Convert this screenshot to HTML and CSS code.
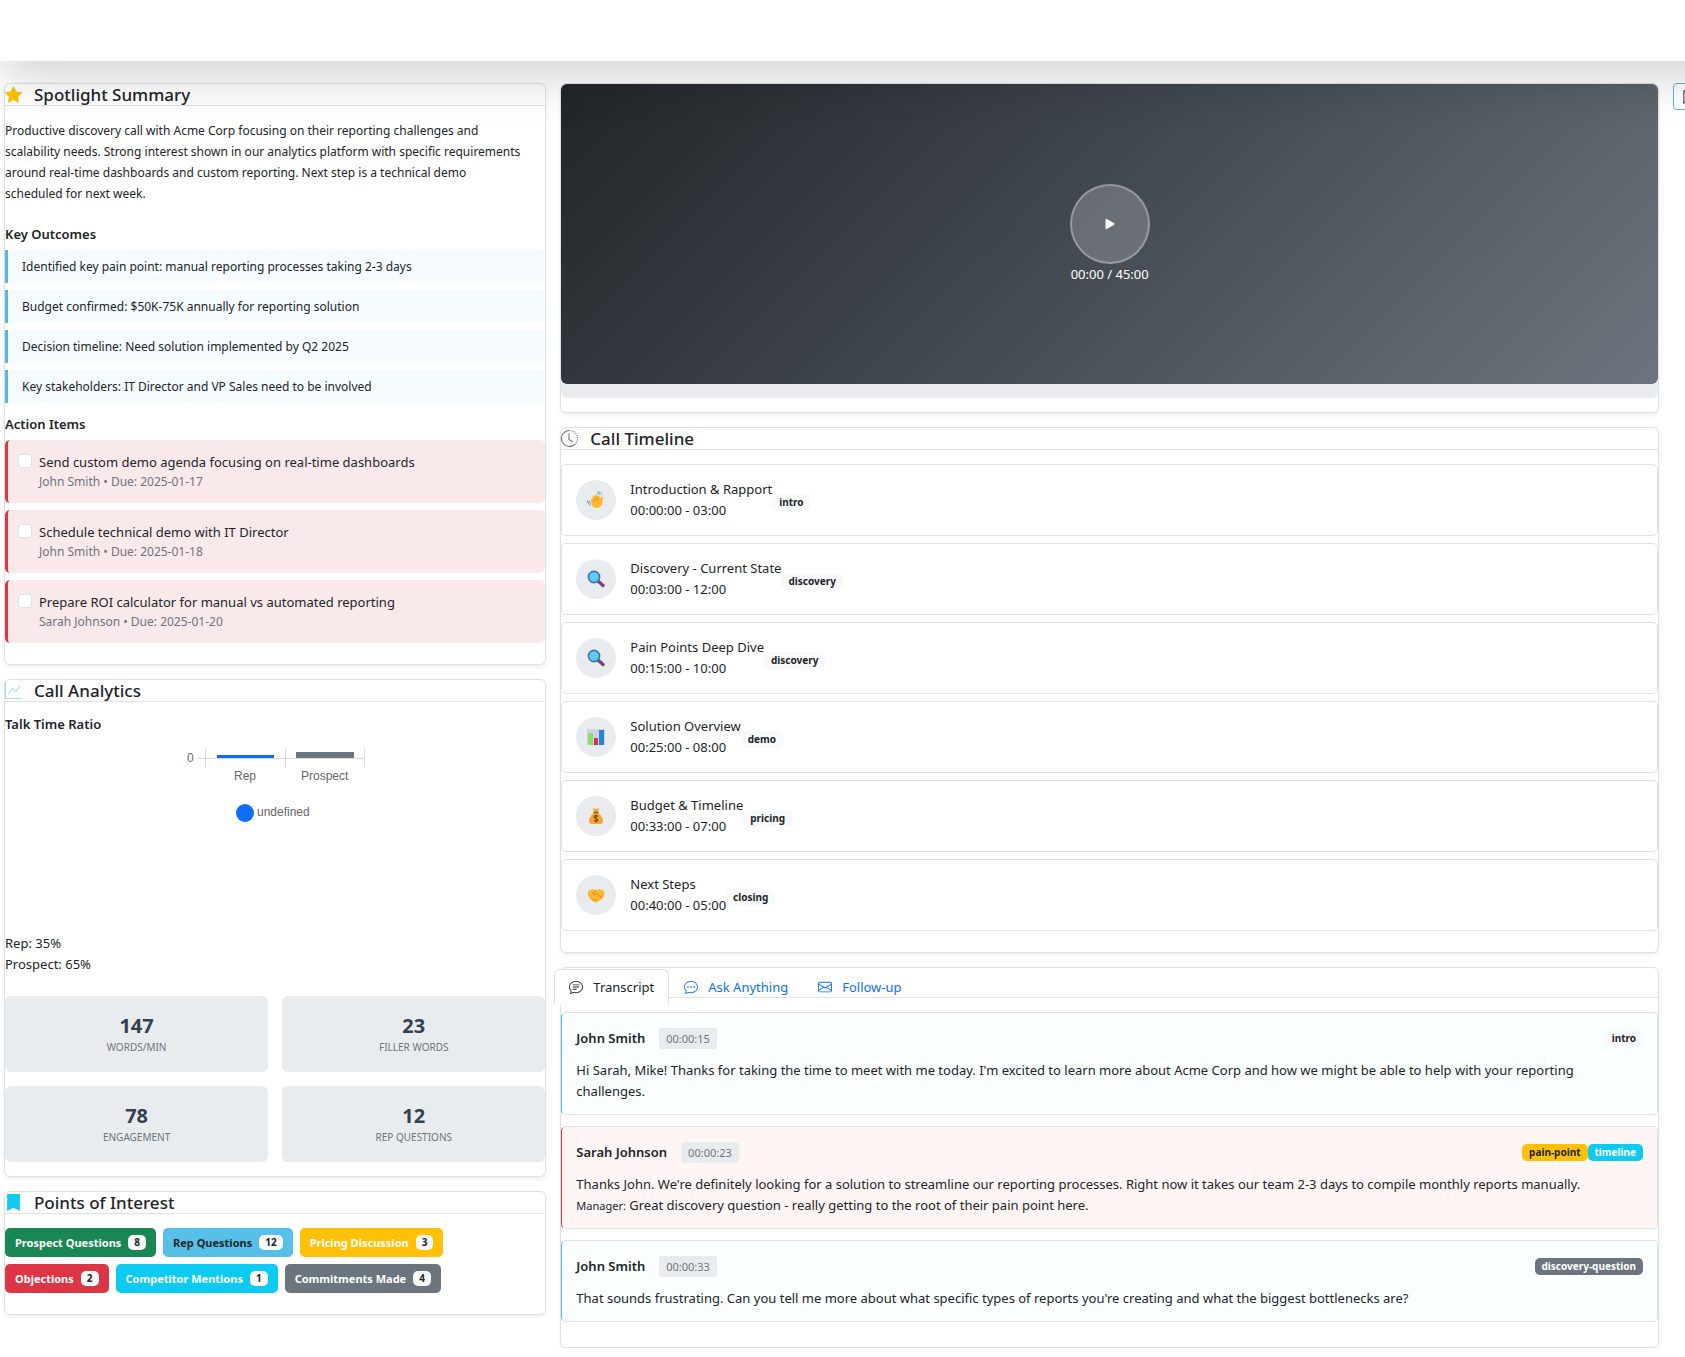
FILE: index.html
```html
<!DOCTYPE html>
<html lang="en">
<head>
    <meta charset="UTF-8">
    <meta name="viewport" content="width=device-width, initial-scale=1.0">
    <title>Call Review</title>
    <link rel="stylesheet" href="styles.css">
</head>
<body>
    <!-- Shared icons -->
    <svg class="sprite" aria-hidden="true">
        <symbol id="search" viewBox="0 0 18 18">
            <path d="M11 11l5 4.500" stroke="#7d3f86" stroke-width="3.400" stroke-linecap="round"/>
            <circle cx="7" cy="7" r="5.600" fill="#5ccdf5" stroke="#4371a8" stroke-width="1.600"/>
        </symbol>
        <symbol id="chat" viewBox="0 0 16 16">
            <path d="M2.678 11.894a1 1 0 0 1 .287.801 11 11 0 0 1-.398 2c1.395-.323 2.247-.697 2.634-.893a1 1 0 0 1 .71-.074A8 8 0 0 0 8 14c3.996 0 7-2.807 7-6s-3.004-6-7-6-7 2.808-7 6c0 1.468.617 2.830 1.678 3.894m-.493 3.905a22 22 0 0 1-.713.129c-.2.032-.352-.176-.273-.362a10 10 0 0 0 .244-.637l.003-.01c.248-.72.45-1.548.524-2.319C.743 11.370 0 9.760 0 8c0-3.866 3.582-7 8-7s8 3.134 8 7-3.582 7-8 7a9 9 0 0 1-2.347-.306c-.52.263-1.639.742-3.468 1.105"/>
        </symbol>
    </svg>

    <nav class="navbar"></nav>

    <main class="layout">
        <div class="column">
            <section class="card summary">
                <h5 class="card-header">
                    <svg class="icon star" viewBox="0 0 16 16"><path d="M3.612 15.443c-.386.198-.824-.149-.746-.592l.83-4.730L.173 6.765c-.329-.314-.158-.888.283-.95l4.898-.696L7.538.792c.197-.39.73-.39.927 0l2.184 4.327 4.898.696c.441.062.612.636.282.95l-3.522 3.356.83 4.730c.078.443-.36.79-.746.592L8 13.187l-4.389 2.256z"/></svg>
                    Spotlight Summary
                </h5>
                <p class="summary-text">Productive discovery call with Acme Corp focusing on their reporting challenges and scalability needs. Strong interest shown in our analytics platform with specific requirements around real-time dashboards and custom reporting. Next step is a technical demo scheduled for next week.</p>
                <h6>Key Outcomes</h6>
                <ul class="outcomes">
                    <li>Identified key pain point: manual reporting processes taking 2-3 days</li>
                    <li>Budget confirmed: $50K-75K annually for reporting solution</li>
                    <li>Decision timeline: Need solution implemented by Q2 2025</li>
                    <li>Key stakeholders: IT Director and VP Sales need to be involved</li>
                </ul>
                <h6>Action Items</h6>
                <div class="action-item">
                    <input type="checkbox" id="action1">
                    <label for="action1">Send custom demo agenda focusing on real-time dashboards
                        <small>John Smith • Due: 2025-01-17</small></label>
                </div>
                <div class="action-item">
                    <input type="checkbox" id="action2">
                    <label for="action2">Schedule technical demo with IT Director
                        <small>John Smith • Due: 2025-01-18</small></label>
                </div>
                <div class="action-item">
                    <input type="checkbox" id="action3">
                    <label for="action3">Prepare ROI calculator for manual vs automated reporting
                        <small>Sarah Johnson • Due: 2025-01-20</small></label>
                </div>
            </section>

            <section class="card analytics">
                <h5 class="card-header">
                    <svg class="icon graph" viewBox="0 0 16 16"><path d="M0 0h1v15h15v1H0zm14.817 3.113a.5.5 0 0 1 .07.704l-4.500 5.500a.5.5 0 0 1-.74.037L7.060 6.767l-3.656 5.027a.5.5 0 0 1-.808-.588l4-5.500a.5.5 0 0 1 .758-.06l2.609 2.610 4.150-5.073a.5.5 0 0 1 .704-.07"/></svg>
                    Call Analytics
                </h5>
                <h6>Talk Time Ratio</h6>
                <svg class="chart" width="208" height="193" viewBox="0 0 208 193" role="img" aria-label="Talk time ratio chart">
                    <path d="M27 18.500h159M34.500 9v18M114.500 9v18M193.500 9v18M186 18.500h8" stroke="#d8d8d8" fill="none"/>
                    <rect x="46" y="15" width="57" height="3" fill="#0d6efd"/>
                    <rect x="125" y="12" width="58" height="6" fill="#6c757d"/>
                    <circle cx="74" cy="73" r="9" fill="#0d6efd"/>
                    <text x="16" y="22">0</text>
                    <text x="63" y="40">Rep</text>
                    <text x="130" y="40">Prospect</text>
                    <text x="86" y="76">undefined</text>
                </svg>
                <div class="ratio">
                    <div>Rep: 35%</div>
                    <div>Prospect: 65%</div>
                </div>
                <div class="stats">
                    <div class="stat"><strong>147</strong><span>WORDS/MIN</span></div>
                    <div class="stat"><strong>23</strong><span>FILLER WORDS</span></div>
                    <div class="stat"><strong>78</strong><span>ENGAGEMENT</span></div>
                    <div class="stat"><strong>12</strong><span>REP QUESTIONS</span></div>
                </div>
            </section>

            <section class="card points">
                <h5 class="card-header">
                    <svg class="icon bookmark" viewBox="0 0 16 16"><path d="M2 0h12v16L8 13l-6 3z"/></svg>
                    Points of Interest
                </h5>
                <div class="point-list">
                    <button type="button" class="point green">Prospect Questions <span>8</span></button>
                    <button type="button" class="point blue">Rep Questions <span>12</span></button>
                    <button type="button" class="point yellow">Pricing Discussion <span>3</span></button>
                    <button type="button" class="point red">Objections <span>2</span></button>
                    <button type="button" class="point cyan">Competitor Mentions <span>1</span></button>
                    <button type="button" class="point gray">Commitments Made <span>4</span></button>
                </div>
            </section>
        </div>

        <div class="column">
            <section class="card player">
                <div class="video">
                    <button type="button" class="play" aria-label="Play">
                        <svg width="18" height="18" viewBox="0 0 16 16"><path d="m11.596 8.697-6.363 3.692c-.54.313-1.233-.066-1.233-.697V4.308c0-.63.692-1.010 1.233-.696l6.363 3.692a.802.802 0 0 1 0 1.393"/></svg>
                    </button>
                    <span>00:00 / 45:00</span>
                </div>
                <div class="progress"></div>
            </section>

            <section class="card timeline">
                <h5 class="card-header">
                    <svg class="icon clock" viewBox="0 0 16 16"><path d="M8.515 1.019A7 7 0 0 0 8 1V0a8 8 0 0 1 .589.022zm2.004.45a7 7 0 0 0-.985-.299l.219-.976q.576.129 1.126.342zm1.370.71a7 7 0 0 0-.439-.27l.493-.87a8 8 0 0 1 .979.654l-.615.789a7 7 0 0 0-.418-.302zm1.834 1.790a7 7 0 0 0-.653-.796l.724-.69q.406.429.747.91zm.744 1.352a7 7 0 0 0-.214-.468l.893-.45a8 8 0 0 1 .45 1.088l-.95.313a7 7 0 0 0-.179-.483m.53 2.507a7 7 0 0 0-.1-1.025l.985-.17q.1.58.116 1.170zm-.131 1.538q.05-.254.081-.51l.993.123a8 8 0 0 1-.23 1.155l-.964-.267q.069-.247.12-.501m-.952 2.379q.276-.436.486-.908l.914.405q-.24.54-.555 1.038zm-.964 1.205q.183-.183.35-.378l.758.653a8 8 0 0 1-.401.432z"/><path d="M8 1a7 7 0 1 0 4.950 11.950l.707.707A8.001 8.001 0 1 1 8 0z"/><path d="M7.500 3a.5.5 0 0 1 .5.5v5.210l3.248 1.856a.5.5 0 0 1-.496.868l-3.500-2A.5.5 0 0 1 7 9V3.500a.5.5 0 0 1 .5-.5"/></svg>
                    Call Timeline
                </h5>
                <div class="event">
                    <div class="event-icon">
                        <svg viewBox="0 0 18 18"><path d="M4 9.500c-.8-1.600.9-2.600 1.900-1.300L5.500 6c-.2-1.500 1.500-1.900 2-.6L8 6l.2-1.600c.3-1.400 1.900-1.300 2.100 0l.3 1.200c.7-1 2.100-.7 2.200.5l.2 2c.5-1.500 1.300-2.400 2.300-2.300 1 .2.900 1.200.7 2l-.6 3.200c-.4 3.500-2.500 5.800-5.600 6-2.500.2-4.100-1-5-3.200z" fill="#fdb62f"/><path d="M5.900 8.200l1.500 3M8 6l1.200 3.600M10.600 5.600l.6 3.400" fill="none" stroke="#e88b20" stroke-width=".7"/><path d="M.8 9.500c-.5 2 .5 4 2.400 4.800M2.600 10.500c-.1 1 .3 1.700 1 2.200M10.500 1c2-.3 3.800.6 4.600 2.300M10.800 2.800c1 0 1.800.4 2.300 1.200" fill="none" stroke="#5796bd" stroke-linecap="round"/></svg>
                    </div>
                    <div>Introduction &amp; Rapport<br>00:00:00 - 03:00</div>
                    <span class="badge light">intro</span>
                </div>
                <div class="event">
                    <div class="event-icon"><svg><use href="#search"/></svg></div>
                    <div>Discovery - Current State<br>00:03:00 - 12:00</div>
                    <span class="badge light">discovery</span>
                </div>
                <div class="event">
                    <div class="event-icon"><svg><use href="#search"/></svg></div>
                    <div>Pain Points Deep Dive<br>00:15:00 - 10:00</div>
                    <span class="badge light">discovery</span>
                </div>
                <div class="event">
                    <div class="event-icon">
                        <svg viewBox="0 0 18 18"><path d="M0 1h18v16H0z" fill="#d5cfe0"/><path d="M1 5h5v12H1z" fill="#8be166"/><path d="M7 10h4v7H7z" fill="#d9286c"/><path d="M12 2h5v15h-5z" fill="#2386d9"/></svg>
                    </div>
                    <div>Solution Overview<br>00:25:00 - 08:00</div>
                    <span class="badge light">demo</span>
                </div>
                <div class="event">
                    <div class="event-icon">
                        <svg viewBox="0 0 18 18"><path d="M6 1l3 1 3-1-1 5c3 1.500 5 5 5 8 0 2-1 3-3 3H5c-2 0-3-1-3-3 0-3 2-6.500 5-8z" fill="#f6a531"/><path d="M6.500 5.500h5" stroke="#925421" stroke-width="1.400"/><path d="M11 9.500C9.500 8 7 8.500 7 10s4 1.500 4 3-3 2-4 .5M9 7.700v7.600" fill="none" stroke="#73451d" stroke-width="1.100"/></svg>
                    </div>
                    <div>Budget &amp; Timeline<br>00:33:00 - 07:00</div>
                    <span class="badge light">pricing</span>
                </div>
                <div class="event">
                    <div class="event-icon">
                        <svg viewBox="0 0 18 18"><path d="M1 5l4-2 4 1 4-1 4 2c1 4 0 6-2 8l-5 3c-1 .6-2 .4-3-.3l-4-3C1 11 .5 8 1 5z" fill="#fdb62f"/><path d="M9 4L6 7c0 1.800 2 2 3.500.5L15 12M7 15l-2-2M10 15l-2-2" fill="none" stroke="#df8620"/></svg>
                    </div>
                    <div>Next Steps<br>00:40:00 - 05:00</div>
                    <span class="badge light">closing</span>
                </div>
            </section>

            <section class="card conversation">
                <ul class="tabs">
                    <li><a href="#transcript" class="tab active">
                        <svg viewBox="0 0 16 16"><use href="#chat"/><path d="M4 5.500a.5.5 0 0 1 .5-.5h7a.5.5 0 0 1 0 1h-7a.5.5 0 0 1-.5-.5M4 8a.5.5 0 0 1 .5-.5h7a.5.5 0 0 1 0 1h-7A.5.5 0 0 1 4 8m0 2.500a.5.5 0 0 1 .5-.5h4a.5.5 0 0 1 0 1h-4a.5.5 0 0 1-.5-.5"/></svg>
                        Transcript</a></li>
                    <li><a href="#ask" class="tab">
                        <svg viewBox="0 0 16 16"><use href="#chat"/><circle cx="4.500" cy="8" r="1"/><circle cx="8" cy="8" r="1"/><circle cx="11.500" cy="8" r="1"/></svg>
                        Ask Anything</a></li>
                    <li><a href="#followup" class="tab">
                        <svg viewBox="0 0 16 16"><path d="M0 4a2 2 0 0 1 2-2h12a2 2 0 0 1 2 2v8a2 2 0 0 1-2 2H2a2 2 0 0 1-2-2zm2-1a1 1 0 0 0-1 1v.217l7 4.200 7-4.200V4a1 1 0 0 0-1-1zm13 2.383-4.708 2.825L15 11.105zm-.034 6.876-5.640-3.471L8 9.583l-1.326-.795-5.640 3.470A1 1 0 0 0 2 13h12a1 1 0 0 0 .966-.741M1 11.105l4.708-2.897L1 5.383z"/></svg>
                        Follow-up</a></li>
                </ul>
                <div id="transcript">
                    <article class="message rep">
                        <header>
                            <strong>John Smith</strong><time>00:00:15</time>
                            <span class="badge light">intro</span>
                        </header>
                        <p>Hi Sarah, Mike! Thanks for taking the time to meet with me today. I'm excited to learn more about Acme Corp and how we might be able to help with your reporting challenges.</p>
                    </article>
                    <article class="message prospect">
                        <header>
                            <strong>Sarah Johnson</strong><time>00:00:23</time>
                            <span class="badge yellow">pain-point</span><span class="badge cyan">timeline</span>
                        </header>
                        <p>Thanks John. We're definitely looking for a solution to streamline our reporting processes. Right now it takes our team 2-3 days to compile monthly reports manually.</p>
                        <p><small>Manager:</small> Great discovery question - really getting to the root of their pain point here.</p>
                    </article>
                    <article class="message rep">
                        <header>
                            <strong>John Smith</strong><time>00:00:33</time>
                            <span class="badge gray">discovery-question</span>
                        </header>
                        <p>That sounds frustrating. Can you tell me more about what specific types of reports you're creating and what the biggest bottlenecks are?</p>
                    </article>
                </div>
            </section>
        </div>

        <div class="column">
            <button type="button" class="notes" aria-label="Comments">
                <svg width="14" height="14" viewBox="0 0 16 16"><path d="M1 15V1h14v11H4zM4 4.500h8M4 7h8M4 9.500h8" fill="none" stroke="#343a40" stroke-width="1.200"/></svg>
            </button>
        </div>
    </main>
</body>
</html>
```
FILE: styles.css
```css
* {
    box-sizing: border-box;
}

body {
    margin: 0;
    background-color: #fff;
    color: #212529;
    font-family: "Noto Sans", "Open Sans", sans-serif;
    font-size: 13px;
    line-height: 21px;
    overflow-x: hidden;
}

button {
    font-family: inherit;
    cursor: pointer;
}

h5, h6, p, ul {
    margin: 0;
    padding: 0;
}

ul {
    list-style: none;
}

.sprite {
    display: none;
}

.navbar {
    position: relative;
    z-index: 2;
    height: 61px;
    margin-right: -60px;
    background-color: #fff;
    box-shadow: 0 16px 48px rgba(0, 0, 0, 0.175);
}

/* Layout */
.layout {
    display: grid;
    grid-template-columns: minmax(0, 1fr) minmax(0, 2fr) 19px;
    align-items: start;
    margin-left: -3px;
    padding-top: 22px;
}

.column {
    display: flex;
    flex-direction: column;
    gap: 14px;
    padding: 0 7px;
}

.card {
    border: 1px solid #dee2e6;
    border-radius: 6px;
    background-color: #fff;
    box-shadow: 0 2px 4px rgba(0, 0, 0, 0.075);
    padding-bottom: 14px;
}

.card-header {
    display: flex;
    align-items: center;
    gap: 12px;
    margin-bottom: 14px;
    border-bottom: 1px solid #dee2e6;
    font-size: 17px;
    font-weight: 500;
    line-height: 21px;
}

.icon {
    width: 17px;
    height: 17px;
    fill: currentColor;
}

.star { color: #ffc107; }
.graph { color: #a5dce8; }
.bookmark { color: #0dcaf0; }
.clock { color: #6c757d; }

h6 {
    margin-bottom: 7px;
    font-size: 13px;
    font-weight: 600;
    line-height: 17px;
}

/* Spotlight summary */
.summary {
    padding-bottom: 21px;
}

.summary-text {
    margin-bottom: 22px;
    padding-right: 24px;
    font-size: 12px;
}

.outcomes {
    display: grid;
    gap: 7px;
    margin-bottom: 13px;
}

.outcomes li {
    padding: 6px 14px;
    border-left: 3px solid #56b9dc;
    background-color: #f5fbfe;
    font-size: 12px;
}

.action-item {
    display: flex;
    gap: 7px;
    padding: 12px 10px;
    border-left: 3px solid #dc3545;
    border-radius: 5px;
    background-color: #fae9eb;
}

.action-item + .action-item {
    margin-top: 7px;
}

.action-item input {
    appearance: none;
    width: 14px;
    height: 14px;
    margin: 2px 0 0;
    border: 1px solid #dee2e6;
    border-radius: 3px;
    background-color: #fff;
}

.action-item small {
    display: block;
    color: #6c757d;
    font-size: 12px;
    line-height: 18px;
}

/* Analytics */
.chart {
    display: block;
    margin: 0 auto;
}

.chart text {
    fill: #666;
    font-family: "Liberation Sans", Arial, sans-serif;
    font-size: 12px;
}

.stats {
    display: grid;
    grid-template-columns: 1fr 1fr;
    gap: 14px;
    margin-top: 21px;
}

.stat {
    display: flex;
    flex-direction: column;
    align-items: center;
    padding: 17px 14px;
    border-radius: 6px;
    background-color: #e9ecef;
}

.stat strong {
    color: #344150;
    font-size: 20px;
    line-height: 26px;
}

.stat span {
    color: #6c757d;
    font-size: 10px;
    line-height: 16px;
}

/* Points of interest */
.points {
    padding-bottom: 21px;
}

.point-list {
    display: flex;
    flex-wrap: wrap;
    gap: 7px;
    max-width: 460px;
}

.point {
    display: flex;
    align-items: center;
    gap: 7px;
    height: 29px;
    padding: 0 10px;
    border: 0;
    border-radius: 5px;
    color: #fff;
    font-size: 11px;
    font-weight: 700;
}

.point span {
    padding: 0 6px;
    border-radius: 5px;
    background-color: #f8f9fa;
    color: #212529;
    font-size: 10px;
    line-height: 15px;
}

.green { background-color: #198754; }
.blue { background-color: #56c0e8; }
.yellow { background-color: #ffc107; }
.red { background-color: #dc3545; }
.cyan { background-color: #0dcaf0; }
.gray { background-color: #6c757d; }
.light { background-color: #f8f9fa; }

.point.blue {
    color: #212529;
}

/* Player */
.video {
    display: flex;
    flex-direction: column;
    align-items: center;
    justify-content: center;
    height: 300px;
    border-radius: 6px;
    background: linear-gradient(135deg, #212529, #454b53 50%, #6c757d);
    color: #fff;
}

.play {
    display: grid;
    place-items: center;
    width: 80px;
    height: 80px;
    border: 2px solid rgba(255, 255, 255, 0.3);
    border-radius: 50%;
    background-color: rgba(255, 255, 255, 0.2);
}

.play svg {
    fill: #fff;
}

.progress {
    height: 14px;
    border-radius: 0 0 6px 6px;
    background-color: #e9ecef;
}

/* Timeline */
.timeline {
    padding-bottom: 21px;
}

.event {
    display: flex;
    align-items: center;
    padding: 14px;
    border: 1px solid #dee2e6;
    border-radius: 5px;
}

.event + .event {
    margin-top: 7px;
}

.event-icon {
    display: grid;
    place-items: center;
    width: 40px;
    height: 40px;
    margin-right: 14px;
    border-radius: 50%;
    background-color: #e9ecef;
}

.event-icon svg {
    width: 18px;
    height: 18px;
}

.badge {
    padding: 0 7px;
    border-radius: 5px;
    color: #fff;
    font-size: 10px;
    font-weight: 700;
    line-height: 17px;
}

.event .badge {
    margin-top: 4px;
}

.badge.light, .badge.yellow {
    color: #212529;
}

/* Transcript */
.conversation {
    padding-bottom: 25px;
}

.tabs {
    display: flex;
    height: 30px;
    margin-bottom: 14px;
    padding-top: 1px;
    border-bottom: 1px solid #dee2e6;
}

.tabs li:first-child {
    margin-left: -7px;
}

.tab {
    display: flex;
    align-items: center;
    gap: 10px;
    height: 36px;
    padding: 0 14px;
    border: 1px solid transparent;
    border-radius: 6px 6px 0 0;
    color: #0d6efd;
    text-decoration: none;
}

.tab.active {
    border-color: #dee2e6 #dee2e6 #fff;
    background-color: #fff;
    color: #212529;
}

.tab svg {
    width: 14px;
    height: 14px;
    fill: currentColor;
}

.message {
    padding: 15px 14px 12px;
    border: 1px solid #dee2e6;
    border-radius: 5px;
}

.message + .message {
    margin-top: 11px;
}

.message.rep {
    border-left-color: #56c0e8;
    background-color: #fafeff;
}

.message.prospect {
    border-left-color: #dc3545;
    background-color: #fff5f5;
}

.message header {
    display: flex;
    align-items: center;
    margin-bottom: 11px;
}

.message strong {
    font-weight: 600;
}

.message time {
    margin: 0 auto 0 14px;
    padding: 0 7px;
    border-radius: 3px;
    background-color: #e9ecef;
    color: #6c757d;
    font-size: 11px;
}

.message small {
    font-size: 11px;
}

.notes {
    display: grid;
    place-items: center;
    width: 34px;
    height: 27px;
    padding: 0;
    border: 1px solid #56b9dc;
    border-radius: 4px;
    background-color: #fff;
}
```
